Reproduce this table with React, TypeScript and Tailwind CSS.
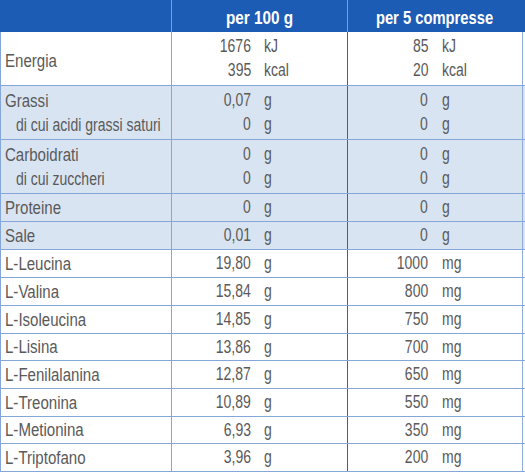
import React from "react";

type Val = [string, string];
type Row = {
  labels: string[];
  a: Val[];
  b: Val[];
  shaded?: boolean;
  h: string;
};

const rows: Row[] = [
  { labels: ["Energia"], a: [["1676", "kJ"], ["395", "kcal"]], b: [["85", "kJ"], ["20", "kcal"]], h: "h-[54px]" },
  { labels: ["Grassi", "  di cui acidi grassi saturi"], a: [["0,07", "g"], ["0", "g"]], b: [["0", "g"], ["0", "g"]], shaded: true, h: "h-[54px]" },
  { labels: ["Carboidrati", "  di cui zuccheri"], a: [["0", "g"], ["0", "g"]], b: [["0", "g"], ["0", "g"]], shaded: true, h: "h-[54px]" },
  { labels: ["Proteine"], a: [["0", "g"]], b: [["0", "g"]], shaded: true, h: "h-[28px]" },
  { labels: ["Sale"], a: [["0,01", "g"]], b: [["0", "g"]], shaded: true, h: "h-[28px]" },
  { labels: ["L-Leucina"], a: [["19,80", "g"]], b: [["1000", "mg"]], h: "h-[28px]" },
  { labels: ["L-Valina"], a: [["15,84", "g"]], b: [["800", "mg"]], h: "h-[28px]" },
  { labels: ["L-Isoleucina"], a: [["14,85", "g"]], b: [["750", "mg"]], h: "h-[28px]" },
  { labels: ["L-Lisina"], a: [["13,86", "g"]], b: [["700", "mg"]], h: "h-[27px]" },
  { labels: ["L-Fenilalanina"], a: [["12,87", "g"]], b: [["650", "mg"]], h: "h-[28px]" },
  { labels: ["L-Treonina"], a: [["10,89", "g"]], b: [["550", "mg"]], h: "h-[28px]" },
  { labels: ["L-Metionina"], a: [["6,93", "g"]], b: [["350", "mg"]], h: "h-[27px]" },
  { labels: ["L-Triptofano"], a: [["3,96", "g"]], b: [["200", "mg"]], h: "h-[28px]" },
];

function Vals({ vals, numW, gap }: { vals: Val[]; numW: string; gap: string }) {
  return (
    <div className="flex flex-col">
      {vals.map((v, i) => (
        <div key={i} className={`flex h-[24px] items-center ${gap}`}>
          <div className={`${numW} text-right`}>
            <span className="inline-block origin-right scale-x-[0.8]">{v[0]}</span>
          </div>
          <span className="inline-block origin-left scale-x-[0.8]">{v[1]}</span>
        </div>
      ))}
    </div>
  );
}

export default function App() {
  return (
    <div
      className="w-[525px] h-[475px] bg-white text-[17.5px] text-[#5a5a5a]"
      style={{ fontFamily: "'Liberation Sans', Arial, sans-serif" }}
    >
      <div className="flex h-[32px] bg-[#1c5cb5] text-white font-bold text-[18px]">
        <div className="w-[172px] border-r border-[#7a9fd6]"></div>
        <div className="w-[176px] border-r border-[#7a9fd6] flex justify-center pt-[5px]">
          <span className="inline-block scale-x-[0.85]">per 100 g</span>
        </div>
        <div className="w-[174px] flex justify-center pt-[5px]">
          <span className="inline-block scale-x-[0.82]">per 5 compresse</span>
        </div>
      </div>
      {rows.map((r, i) => (
        <div
          key={i}
          className={`flex ${r.h} border-b border-[#84a6d8] ${r.shaded ? "bg-[#d9e4f2]" : "bg-white"}`}
        >
          <div
            className={`w-[172px] border-l border-r border-[#84a6d8] pl-[4px] flex flex-col justify-center ${
              i === 0 ? "pt-[4px]" : ""
            }`}
          >
            {r.labels.map((l, j) => {
              const sub = l.startsWith("  ");
              return (
                <div key={j} className={`h-[24px] leading-[24px] whitespace-nowrap ${sub ? "pl-[11px]" : ""}`}>
                  <span className={`inline-block origin-left ${sub ? "scale-x-[0.8]" : "scale-x-[0.86]"}`}>
                    {l.trim()}
                  </span>
                </div>
              );
            })}
          </div>
          <div className="w-[176px] border-r border-[#2f63b0] flex flex-col justify-center">
            <Vals vals={r.a} numW="w-[79px]" gap="gap-[13px]" />
          </div>
          <div className="w-[175px] border-r border-[#8eabda] flex flex-col justify-center">
            <Vals vals={r.b} numW="w-[80px]" gap="gap-[14px]" />
          </div>
        </div>
      ))}
    </div>
  );
}
